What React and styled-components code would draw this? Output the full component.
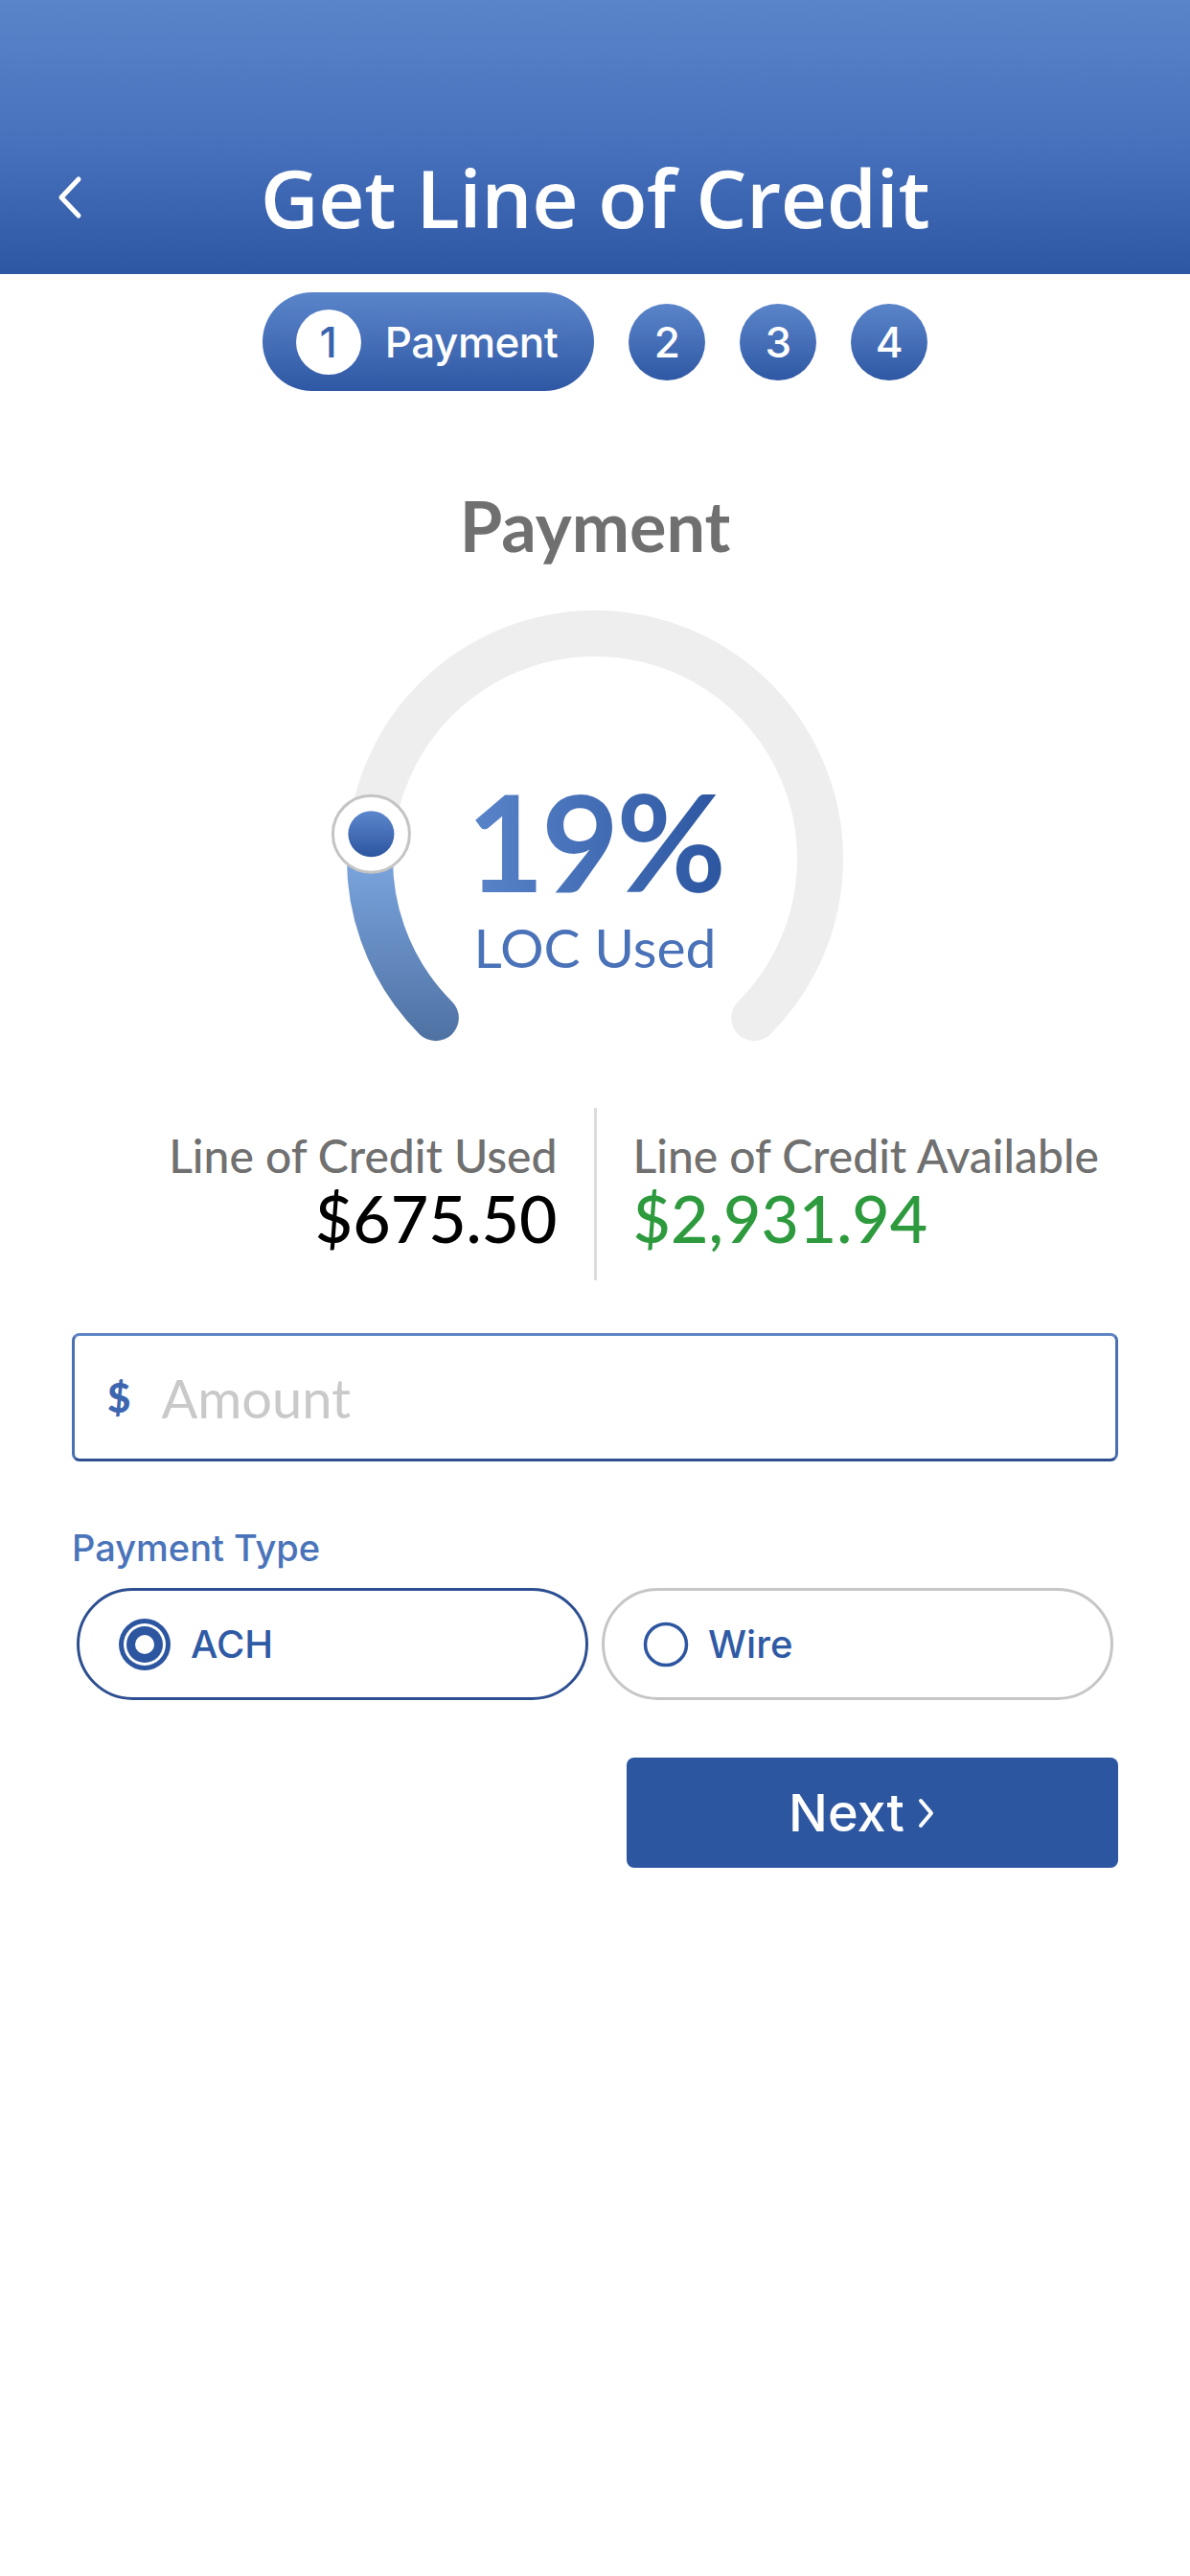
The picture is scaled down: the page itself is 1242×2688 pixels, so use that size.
import React from "react";
import styled, { createGlobalStyle } from "styled-components";

const Global = createGlobalStyle`
  html, body { margin: 0; padding: 0; background: #ffffff; }
  body { font-family: "Lato", "Inter", sans-serif; }
  * { box-sizing: border-box; }
`;

const Page = styled.div`
  width: 1242px;
  min-height: 2688px;
  background: #ffffff;
  display: flex;
  flex-direction: column;
  align-items: stretch;
`;

const Header = styled.header`
  height: 286px;
  padding-top: 146px;
  background: linear-gradient(180deg, #5b85ca 0%, #4670bb 55%, #2e57a3 100%);
  display: grid;
  grid-template-columns: 140px 1fr 140px;
  align-items: start;
`;

const BackButton = styled.button`
  height: 120px;
  border: 0;
  background: transparent;
  padding: 0 0 0 58px;
  display: flex;
  align-items: center;
  cursor: pointer;
`;

const Title = styled.h1`
  margin: 0;
  height: 120px;
  line-height: 120px;
  text-align: center;
  color: #ffffff;
  font-family: "Open Sans", "Inter", sans-serif;
  font-weight: 600;
  font-size: 84px;
  letter-spacing: -0.5px;
`;

const Stepper = styled.nav`
  margin-top: 19px;
  display: flex;
  justify-content: center;
  align-items: center;
  gap: 36px;
`;

const ActivePill = styled.div`
  height: 103px;
  padding: 0 38px 0 35px;
  border-radius: 52px;
  background: linear-gradient(180deg, #5b85ca 0%, #2f58a4 100%);
  display: flex;
  align-items: center;
  gap: 25px;
`;

const PillNumber = styled.span`
  width: 68px;
  height: 68px;
  border-radius: 50%;
  background: #ffffff;
  color: #3a63ad;
  display: flex;
  align-items: center;
  justify-content: center;
  font-family: "Inter", sans-serif;
  font-weight: 500;
  font-size: 44px;
`;

const PillLabel = styled.span`
  color: #ffffff;
  font-family: "Inter", sans-serif;
  font-weight: 500;
  font-size: 44px;
  letter-spacing: -0.5px;
`;

const StepDot = styled.span`
  width: 80px;
  height: 80px;
  border-radius: 50%;
  background: linear-gradient(180deg, #5b85ca 0%, #2f58a4 100%);
  color: #ffffff;
  display: flex;
  align-items: center;
  justify-content: center;
  font-family: "Inter", sans-serif;
  font-weight: 500;
  font-size: 44px;
`;

const SectionTitle = styled.h2`
  margin: 100px 0 0;
  line-height: 80px;
  text-align: center;
  color: #707070;
  font-family: "Lato", sans-serif;
  font-weight: 700;
  font-size: 72px;
`;

const GaugeWrap = styled.div`
  position: relative;
  margin: 28px auto 0;
  width: 560px;
  height: 472px;
`;

const GaugeText = styled.div`
  position: absolute;
  left: 0;
  right: 0;
  top: 196px;
  display: flex;
  flex-direction: column;
  align-items: center;
`;

const Percent = styled.span`
  font-family: "Lato", sans-serif;
  font-weight: 700;
  font-size: 140px;
  line-height: 130px;
  letter-spacing: -3px;
  background: linear-gradient(90deg, #5b85ca 0%, #2c56a0 100%);
  -webkit-background-clip: text;
  background-clip: text;
  color: transparent;
`;

const GaugeCaption = styled.span`
  margin-top: 14px;
  font-family: "Lato", sans-serif;
  font-weight: 400;
  font-size: 57px;
  line-height: 64px;
  color: #4a72b8;
`;

const Stats = styled.section`
  margin-top: 68px;
  display: grid;
  grid-template-columns: 1fr auto 1fr;
  height: 180px;
`;

const StatCol = styled.div`
  display: flex;
  flex-direction: column;
  justify-content: center;
  align-items: ${(p) => (p.$align === "right" ? "flex-end" : "flex-start")};
  padding: ${(p) => (p.$align === "right" ? "0 38px 4px 0" : "0 0 4px 38px")};
`;

const Divider = styled.div`
  width: 3px;
  background: #dcdcdc;
`;

const StatLabel = styled.span`
  font-family: "Lato", sans-serif;
  font-weight: 500;
  font-size: 48px;
  line-height: 54px;
  color: #707070;
`;

const StatValue = styled.span`
  font-family: "Lato", sans-serif;
  font-weight: 500;
  font-size: 68px;
  line-height: 76px;
  color: ${(p) => p.$color};
`;

const AmountField = styled.label`
  margin: 55px 75px 0;
  height: 134px;
  border: 3px solid #4a6fb2;
  border-top-color: #5e84c6;
  border-bottom-color: #2f4f8f;
  border-radius: 8px;
  display: flex;
  align-items: center;
  padding-left: 34px;
  gap: 32px;
  background: #ffffff;
`;

const Currency = styled.span`
  font-family: "Lato", sans-serif;
  font-weight: 900;
  font-size: 42px;
  color: #3d66b0;
`;

const AmountInput = styled.input`
  flex: 1;
  border: 0;
  outline: none;
  background: transparent;
  font-family: "Lato", sans-serif;
  font-size: 56px;
  color: #222;
  padding: 0;
  &::placeholder { color: #c9c9c9; }
`;

const FieldLabel = styled.div`
  margin: 66px 75px 0;
  font-family: "Inter", sans-serif;
  font-weight: 500;
  font-size: 38px;
  line-height: 48px;
  color: #4a74ba;
`;

const RadioRow = styled.div`
  margin: 18px 80px 0;
  display: grid;
  grid-template-columns: 1fr 1fr;
  gap: 14px;
`;

const RadioPill = styled.button`
  height: 117px;
  border-radius: 59px;
  background: #ffffff;
  border: ${(p) => (p.$selected ? "3px solid #2d4f91" : "3px solid #c6c6c6")};
  display: flex;
  align-items: center;
  padding: 0 0 0 ${(p) => (p.$selected ? "40px" : "40px")};
  gap: ${(p) => (p.$selected ? "20px" : "20px")};
  cursor: pointer;
`;

const RadioText = styled.span`
  font-family: "Inter", sans-serif;
  font-weight: 500;
  font-size: 40px;
  color: #2f5aa5;
`;

const Actions = styled.div`
  margin: 60px 75px 0;
  display: flex;
  justify-content: flex-end;
`;

const NextButton = styled.button`
  width: 513px;
  height: 115px;
  border: 0;
  border-radius: 8px;
  background: #2c56a0;
  color: #ffffff;
  display: flex;
  align-items: center;
  justify-content: center;
  gap: 12px;
  padding: 0 20px 0 0;
  font-family: "Inter", sans-serif;
  font-weight: 500;
  font-size: 54px;
  cursor: pointer;
`;

const C = { cx: 280, cy: 280, r: 235 };
const pt = (deg) => {
  const a = (deg * Math.PI) / 180;
  return [C.cx + C.r * Math.cos(a), C.cy + C.r * Math.sin(a)];
};

function Gauge({ percent }) {
  const startDeg = 135;
  const sweep = 270;
  const endDeg = startDeg + sweep;
  const progDeg = startDeg + (sweep * percent) / 100;
  const [sx, sy] = pt(startDeg);
  const [ex, ey] = pt(endDeg);
  const [px, py] = pt(progDeg);
  const progLarge = (sweep * percent) / 100 > 180 ? 1 : 0;
  return (
    <GaugeWrap>
      <svg width="560" height="472" viewBox="0 0 560 472">
        <defs>
          <linearGradient id="prog" gradientUnits="userSpaceOnUse" x1="0" y1="250" x2="0" y2="470">
            <stop offset="0" stopColor="#82ade8" />
            <stop offset="1" stopColor="#4e71a2" />
          </linearGradient>
          <linearGradient id="dot" x1="0" y1="0" x2="0" y2="1">
            <stop offset="0" stopColor="#5d87cc" />
            <stop offset="1" stopColor="#2c55a0" />
          </linearGradient>
        </defs>
        <path
          d={`M ${sx} ${sy} A ${C.r} ${C.r} 0 1 1 ${ex} ${ey}`}
          fill="none"
          stroke="#eeeeee"
          strokeWidth="48"
          strokeLinecap="round"
        />
        <path
          d={`M ${sx} ${sy} A ${C.r} ${C.r} 0 ${progLarge} 1 ${px} ${py}`}
          fill="none"
          stroke="url(#prog)"
          strokeWidth="48"
          strokeLinecap="round"
        />
        <circle cx={px} cy={py} r="40" fill="#ffffff" stroke="#c4c4c4" strokeWidth="3" />
        <circle cx={px} cy={py} r="24" fill="url(#dot)" />
      </svg>
      <GaugeText>
        <Percent>{percent}%</Percent>
        <GaugeCaption>LOC Used</GaugeCaption>
      </GaugeText>
    </GaugeWrap>
  );
}

function RadioIcon({ checked }) {
  return checked ? (
    <svg width="56" height="56" viewBox="0 0 56 56">
      <circle cx="28" cy="28" r="27" fill="#2d56a0" />
      <circle cx="28" cy="28" r="22" fill="#ffffff" />
      <circle cx="28" cy="28" r="19" fill="#2d56a0" />
      <circle cx="28" cy="28" r="10" fill="#ffffff" />
    </svg>
  ) : (
    <svg width="48" height="48" viewBox="0 0 48 48">
      <circle cx="24" cy="24" r="21.5" fill="none" stroke="#2d56a0" strokeWidth="3.5" />
    </svg>
  );
}

export default function App() {
  const [type, setType] = React.useState("ACH");
  return (
    <Page>
      <Global />
      <Header>
        <BackButton aria-label="Back">
          <svg width="30" height="46" viewBox="0 0 30 46">
            <path d="M24 4 L6 23 L24 42" fill="none" stroke="#ffffff" strokeWidth="5" strokeLinecap="round" strokeLinejoin="round" />
          </svg>
        </BackButton>
        <Title>Get Line of Credit</Title>
        <span />
      </Header>

      <Stepper>
        <ActivePill>
          <PillNumber>1</PillNumber>
          <PillLabel>Payment</PillLabel>
        </ActivePill>
        <StepDot>2</StepDot>
        <StepDot>3</StepDot>
        <StepDot>4</StepDot>
      </Stepper>

      <SectionTitle>Payment</SectionTitle>

      <Gauge percent={19} />

      <Stats>
        <StatCol $align="right">
          <StatLabel>Line of Credit Used</StatLabel>
          <StatValue $color="#000000">$675.50</StatValue>
        </StatCol>
        <Divider />
        <StatCol $align="left">
          <StatLabel>Line of Credit Available</StatLabel>
          <StatValue $color="#2e9a3e">$2,931.94</StatValue>
        </StatCol>
      </Stats>

      <AmountField>
        <Currency>$</Currency>
        <AmountInput placeholder="Amount" />
      </AmountField>

      <FieldLabel>Payment Type</FieldLabel>
      <RadioRow>
        <RadioPill $selected={type === "ACH"} onClick={() => setType("ACH")}>
          <RadioIcon checked={type === "ACH"} />
          <RadioText>ACH</RadioText>
        </RadioPill>
        <RadioPill $selected={type === "Wire"} onClick={() => setType("Wire")}>
          <RadioIcon checked={type === "Wire"} />
          <RadioText>Wire</RadioText>
        </RadioPill>
      </RadioRow>

      <Actions>
        <NextButton>
          Next
          <svg width="22" height="38" viewBox="0 0 22 38">
            <path d="M5 6 L16 19 L5 32" fill="none" stroke="#ffffff" strokeWidth="4" strokeLinecap="round" strokeLinejoin="round" />
          </svg>
        </NextButton>
      </Actions>
    </Page>
  );
}
